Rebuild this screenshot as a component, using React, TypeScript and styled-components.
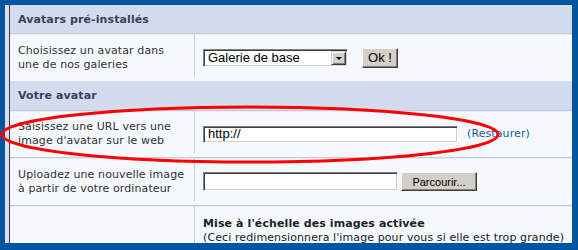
import React from 'react'
import styled, { createGlobalStyle } from 'styled-components'

const GlobalStyle = createGlobalStyle`
  body {
    margin: 0;
    background: #00569e;
  }
`

const Frame = styled.div`
  position: relative;
  width: 578px;
  height: 250px;
  box-sizing: border-box;
  padding: 5px 6px 7px 5px;
  background: #00569e;
  overflow: hidden;
  font-family: 'DejaVu Sans', Verdana, sans-serif;
  font-size: 11px;
  letter-spacing: 0.1px;
`

const Panel = styled.div`
  height: 100%;
  border-left: 4px solid #d9e0eb;
  overflow: hidden;
`

const Table = styled.div`
  height: 100%;
  border-left: 1px solid #2f3b58;
  background: #f5f9fe;
  display: flex;
  flex-direction: column;
`

const SectionHead = styled.div<{ $h: number }>`
  flex: none;
  height: ${p => p.$h}px;
  display: flex;
  align-items: center;
  padding-left: 8px;
  background: #d3dcec;
  color: #3a3f5c;
  font-weight: bold;
`

const Row = styled.div<{ $h: number }>`
  flex: none;
  box-sizing: border-box;
  height: ${p => p.$h}px;
  display: grid;
  grid-template-columns: 185px 1fr;
  border-top: 1px solid #c2cbda;
  box-shadow: inset 0 1px 0 #e6ecf4;
  background: #f5f9fe;
`

const Label = styled.div`
  display: flex;
  align-items: center;
  padding: 0 8px;
  line-height: 14px;
  color: #333;
  background: linear-gradient(#c9d1de, #c9d1de) right top / 1px calc(100% - 4px) no-repeat;
`

const Field = styled.div<{ $top?: boolean }>`
  display: flex;
  align-items: ${p => (p.$top ? 'flex-start' : 'center')};
  padding: ${p => (p.$top ? '11px 0 0 8px' : '0 0 0 8px')};
  flex-direction: ${p => (p.$top ? 'column' : 'row')};
  line-height: 14px;
  color: #222;
`

const Sunken = styled.div<{ $w: number; $h: number }>`
  box-sizing: border-box;
  width: ${p => p.$w}px;
  height: ${p => p.$h}px;
  display: flex;
  align-items: center;
  padding-left: 4px;
  background: #fff;
  border: 1px solid;
  border-color: #808080 #fff #fff #808080;
  box-shadow: inset 1px 1px 0 #404040, inset -1px -1px 0 #d4d0c8;
  font-family: 'Liberation Sans', Arial, sans-serif;
  font-size: 13px;
  letter-spacing: normal;
  color: #000;
`

const SelectText = styled.span`
  flex: 1;
`

const DropButton = styled.div`
  box-sizing: border-box;
  width: 15px;
  height: 14px;
  margin-right: 1px;
  display: flex;
  align-items: center;
  justify-content: center;
  background: #d4d0c8;
  border: 1px solid;
  border-color: #d4d0c8 #404040 #404040 #d4d0c8;
  box-shadow: inset 1px 1px 0 #fff, inset -1px -1px 0 #808080;

  &::before {
    content: '';
    border-left: 3px solid transparent;
    border-right: 3px solid transparent;
    border-top: 3px solid #000;
    margin-top: 1px;
  }
`

const Button = styled.div<{ $w: number; $h: number; $size: number; $gap: number }>`
  box-sizing: border-box;
  width: ${p => p.$w}px;
  height: ${p => p.$h}px;
  margin-left: ${p => p.$gap}px;
  display: flex;
  align-items: center;
  justify-content: center;
  background: #d4d0c8;
  border: 1px solid;
  border-color: #fff #404040 #404040 #fff;
  box-shadow: inset -1px -1px 0 #808080;
  font-family: 'Liberation Sans', Arial, sans-serif;
  font-size: ${p => p.$size}px;
  letter-spacing: normal;
  color: #000;
`

const Restore = styled.span`
  margin-left: 9px;
  color: #245c9c;
`

const Strong = styled.span`
  font-weight: bold;
  color: #222;
`

const Mark = styled.svg`
  position: absolute;
  left: 0;
  top: 0;
  pointer-events: none;
`

export default function App() {
  return (
    <>
      <GlobalStyle />
      <Frame>
        <Panel>
          <Table>
            <SectionHead $h={28}>Avatars pré-installés</SectionHead>
            <Row $h={48}>
              <Label>
                Choisissez un avatar dans
                <br />
                une de nos galeries
              </Label>
              <Field>
                <Sunken $w={145} $h={18}>
                  <SelectText>Galerie de base</SelectText>
                  <DropButton />
                </Sunken>
                <Button $w={36} $h={20} $size={13} $gap={14}>
                  Ok !
                </Button>
              </Field>
            </Row>
            <SectionHead $h={29}>Votre avatar</SectionHead>
            <Row $h={47}>
              <Label>
                Saisissez une URL vers une
                <br />
                image d'avatar sur le web
              </Label>
              <Field>
                <Sunken $w={255} $h={17}>http://</Sunken>
                <Restore>(Restaurer)</Restore>
              </Field>
            </Row>
            <Row $h={48}>
              <Label>
                Uploadez une nouvelle image
                <br />
                à partir de votre ordinateur
              </Label>
              <Field>
                <Sunken $w={195} $h={19} />
                <Button $w={76} $h={19} $size={11} $gap={3}>
                  Parcourir...
                </Button>
              </Field>
            </Row>
            <Row $h={60}>
              <Label />
              <Field $top>
                <Strong>Mise à l'échelle des images activée</Strong>
                <span>(Ceci redimensionnera l'image pour vous si elle est trop grande)</span>
              </Field>
            </Row>
          </Table>
        </Panel>
        <Mark width={578} height={250}>
          <ellipse cx={250} cy={134.5} rx={248} ry={27.5} fill="none" stroke="#ff0000" strokeWidth={3} />
        </Mark>
      </Frame>
    </>
  )
}
